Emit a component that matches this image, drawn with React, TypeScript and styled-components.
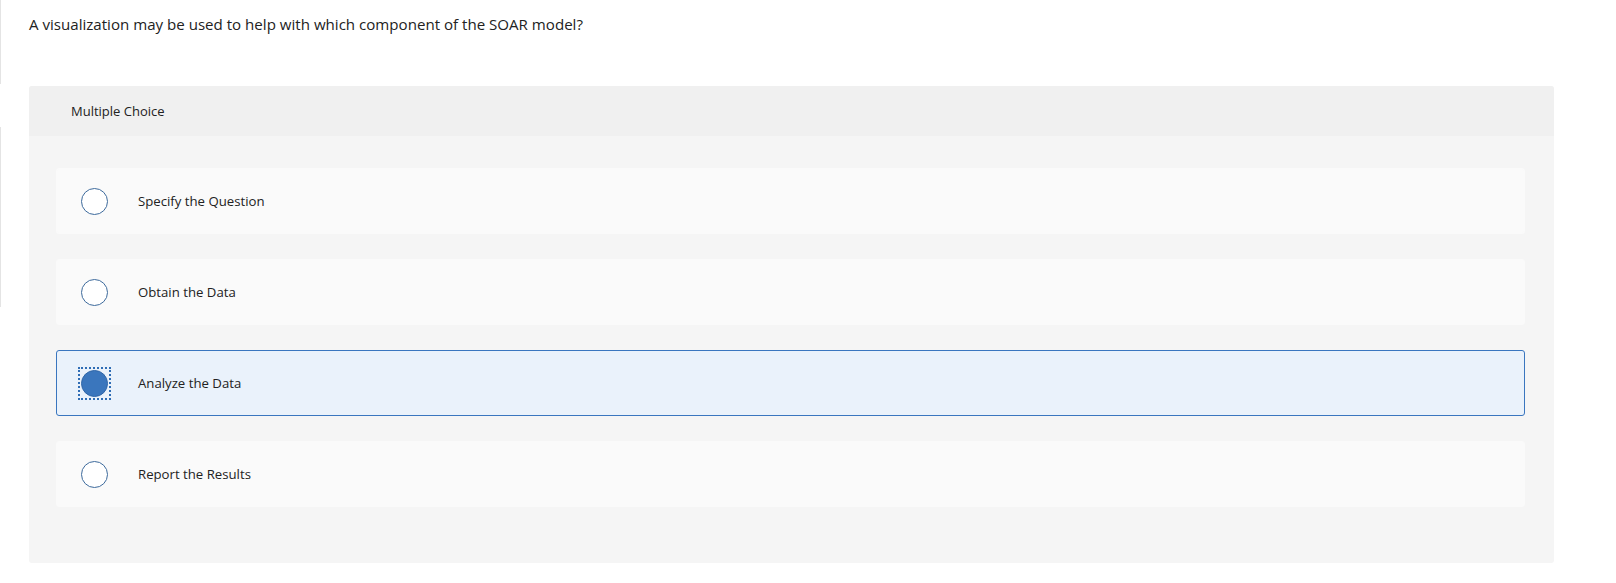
import React from "react";
import styled, { createGlobalStyle } from "styled-components";

const Global = createGlobalStyle`
  html, body { margin: 0; padding: 0; background: #ffffff; }
  body { font-family: "Open Sans", Lato, "Liberation Sans", sans-serif; color: #222; }
`;

const Page = styled.div`
  display: flex;
  align-items: flex-start;
  min-height: 583px;
`;

const Gutter = styled.div`
  display: flex;
  flex-direction: column;
  width: 1px;
  flex: none;
`;

const GutterLine = styled.div<{ $top: number; $h: number }>`
  margin-top: ${(p) => p.$top}px;
  height: ${(p) => p.$h}px;
  width: 1px;
  background: #e4e4e4;
`;

const Main = styled.main`
  flex: 1;
  padding: 15px 0 0 28px;
`;

const Question = styled.p`
  margin: 0;
  font-size: 15.1px;
  line-height: 18px;
  color: #222;
`;

const Panel = styled.section`
  margin-top: 53px;
  width: 1525px;
  background: #f5f5f5;
  border-radius: 3px;
  overflow: hidden;
`;

const PanelHeader = styled.div`
  height: 50px;
  display: flex;
  align-items: center;
  padding-left: 42px;
  background: #f0f0f0;
  font-size: 13px;
  color: #222;
`;

const Options = styled.div`
  display: flex;
  flex-direction: column;
  gap: 25px;
  padding: 32px 29px 56px 27px;
`;

const Option = styled.label<{ $selected?: boolean }>`
  box-sizing: border-box;
  height: 66px;
  display: flex;
  align-items: center;
  padding-left: 21px;
  border-radius: 3px;
  background: ${(p) => (p.$selected ? "#eaf2fb" : "#fafafa")};
  border: 1px solid ${(p) => (p.$selected ? "#3a76bf" : "#fafafa")};
  cursor: pointer;
`;

const RadioWrap = styled.span<{ $focus?: boolean }>`
  box-sizing: border-box;
  width: 33px;
  height: 33px;
  flex: none;
  display: flex;
  align-items: center;
  justify-content: center;
  border: 2px dotted ${(p) => (p.$focus ? "#2f6db5" : "transparent")};
`;

const Radio = styled.span<{ $checked?: boolean }>`
  box-sizing: border-box;
  width: 27px;
  height: 27px;
  border-radius: 50%;
  border: 1.5px solid ${(p) => (p.$checked ? "#2f66a8" : "#3d6a9c")};
  background: ${(p) => (p.$checked ? "#3a76bd" : "#ffffff")};
`;

const OptionText = styled.span`
  margin-left: 27px;
  font-size: 13.2px;
  color: #222;
`;

const choices = [
  "Specify the Question",
  "Obtain the Data",
  "Analyze the Data",
  "Report the Results",
];

export default function App() {
  const selected = 2;
  return (
    <>
      <Global />
      <Page>
        <Gutter>
          <GutterLine $top={0} $h={84} />
          <GutterLine $top={43} $h={180} />
        </Gutter>
        <Main>
          <Question>A visualization may be used to help with which component of the SOAR model?</Question>
          <Panel>
            <PanelHeader>Multiple Choice</PanelHeader>
            <Options>
              {choices.map((c, i) => (
                <Option key={c} $selected={i === selected}>
                  <RadioWrap $focus={i === selected}>
                    <Radio $checked={i === selected} />
                  </RadioWrap>
                  <OptionText>{c}</OptionText>
                </Option>
              ))}
            </Options>
          </Panel>
        </Main>
      </Page>
    </>
  );
}
